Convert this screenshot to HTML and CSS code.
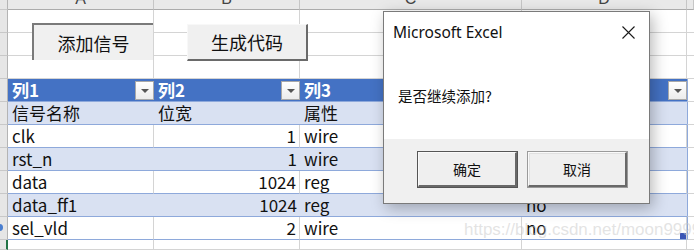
FILE: index.html
```html
<!DOCTYPE html>
<html>
<head>
    <title>信号表 - Excel</title>
    <link rel="stylesheet" href="styles.css">
</head>
<body>
    <div class="sheet">
        <div class="row colhead">
            <div class="rh"></div>
            <div class="ch"><span>A</span></div>
            <div class="ch"><span>B</span></div>
            <div class="ch"><span>C</span></div>
            <div class="ch"><span>D</span></div>
            <div class="ch edge"></div>
        </div>
        <div class="row"><div class="rh"></div><div class="c"></div><div class="c"></div><div class="c"></div><div class="c"></div><div class="c edge"></div></div>
        <div class="row"><div class="rh"></div><div class="c"></div><div class="c"></div><div class="c"></div><div class="c"></div><div class="c edge"></div></div>
        <div class="row"><div class="rh"></div><div class="c"></div><div class="c"></div><div class="c"></div><div class="c"></div><div class="c edge"></div></div>

        <div class="row thead">
            <div class="rh"></div>
            <div class="c">列1<span class="drop"></span></div>
            <div class="c">列2<span class="drop"></span></div>
            <div class="c">列3<span class="drop"></span></div>
            <div class="c"><span class="drop"></span></div>
            <div class="c edge"></div>
        </div>
        <div class="row band">
            <div class="rh"></div>
            <div class="c">信号名称</div>
            <div class="c">位宽</div>
            <div class="c">属性</div>
            <div class="c"></div>
            <div class="c edge"></div>
        </div>
        <div class="row body">
            <div class="rh"></div>
            <div class="c">clk</div>
            <div class="c num">1</div>
            <div class="c">wire</div>
            <div class="c"></div>
            <div class="c edge"></div>
        </div>
        <div class="row band">
            <div class="rh"></div>
            <div class="c">rst_n</div>
            <div class="c num">1</div>
            <div class="c">wire</div>
            <div class="c"></div>
            <div class="c edge"></div>
        </div>
        <div class="row body">
            <div class="rh"></div>
            <div class="c">data</div>
            <div class="c num">1024</div>
            <div class="c">reg</div>
            <div class="c"></div>
            <div class="c edge"></div>
        </div>
        <div class="row band">
            <div class="rh"></div>
            <div class="c">data_ff1</div>
            <div class="c num">1024</div>
            <div class="c">reg</div>
            <div class="c">no</div>
            <div class="c edge"></div>
        </div>
        <div class="row body">
            <div class="rh"><span class="dot"></span></div>
            <div class="c">sel_vld</div>
            <div class="c num">2</div>
            <div class="c">wire</div>
            <div class="c">no<span class="handle"></span></div>
            <div class="c edge"></div>
        </div>
        <div class="row tail">
            <div class="rh sel"></div><div class="c"></div><div class="c"></div><div class="c"></div><div class="c"></div><div class="c edge"></div>
        </div>
    </div>

    <!-- form buttons floating on the sheet -->
    <div class="xl-btn add">添加信号</div>
    <div class="xl-btn gen">生成代码</div>

    <div class="watermark">https://blog.csdn.net/moon9999</div>

    <div class="dialog">
        <div class="dlg-top">
            <div class="dlg-title">
                <span>Microsoft Excel</span>
                <svg class="close" width="13" height="13" viewBox="0 0 13 13">
                    <path d="M0.5 0.5 L12.5 12.5 M12.5 0.5 L0.5 12.5" stroke="#1a1a1a" stroke-width="1.1" fill="none"/>
                </svg>
            </div>
            <div class="dlg-msg">是否继续添加?</div>
        </div>
        <div class="dlg-foot">
            <div class="dlg-btn ok">确定</div>
            <div class="dlg-btn">取消</div>
        </div>
    </div>
</body>
</html>
```

FILE: styles.css
```css
body {
    margin: 0;
    width: 694px;
    height: 250px;
    overflow: hidden;
    background: #fff;
    font-family: "Noto Sans CJK SC", "DejaVu Sans", sans-serif;
    color: #111;
}

.sheet {
    display: flex;
    flex-direction: column;
}

.row {
    display: grid;
    grid-template-columns: 8px 146px 146px 222px 165px 1fr;
    height: 23px;
    font-size: 17px;
    line-height: 22px;
}

.row.tail {
    height: 10px;
}

.rh {
    background: #e6e6e6;
    border-right: 1px solid #b4b4b4;
    border-bottom: 1px solid #c8c8c8;
    position: relative;
}

.c {
    border-right: 1px solid #d4d4d4;
    border-bottom: 1px solid #d4d4d4;
    padding: 0 4px;
    white-space: nowrap;
    overflow: hidden;
    position: relative;
}

.colhead {
    height: 10px;
}

.ch {
    background: #e9e9e9;
    border-right: 1px solid #c6c6c6;
    border-bottom: 1px solid #ababab;
    display: flex;
    justify-content: center;
    align-items: flex-end;
    overflow: hidden;
    font-family: "Liberation Sans", sans-serif;
    font-size: 16px;
    color: #444;
}

.ch span {
    line-height: 1;
    margin-bottom: 2px;
}

.thead .c {
    background: #4472c4;
    color: #fff;
    font-weight: bold;
    border-right: none;
    border-bottom: 1px solid #8ea9db;
    padding-left: 4px;
}

.thead .c.edge,
.band .c.edge,
.body .c.edge {
    background: #fff;
    border-left: 1px solid #8ea9db;
    border-bottom: 1px solid #d4d4d4;
    border-right: none;
}

.band .c {
    background: #d9e1f2;
    border-right: none;
    border-bottom: 1px solid #8ea9db;
}

.body .c {
    border-bottom: 1px solid #8ea9db;
}

.num {
    text-align: right;
    padding-right: 3px;
}

.drop {
    position: absolute;
    right: 0;
    top: 2px;
    width: 19px;
    height: 19px;
    box-sizing: border-box;
    border: 1px solid #a9a9a9;
    background: linear-gradient(#ffffff, #ececec);
}

.drop::after {
    content: "";
    position: absolute;
    left: 5px;
    top: 7px;
    border-left: 4px solid transparent;
    border-right: 4px solid transparent;
    border-top: 4px solid #555;
}

.handle {
    position: absolute;
    right: 0;
    bottom: 0;
    width: 6px;
    height: 6px;
    background: #3b56b5;
}

.dot {
    position: absolute;
    left: -4px;
    top: 7px;
    width: 7px;
    height: 7px;
    border-radius: 50%;
    background: #4a7fd0;
}

.rh.sel {
    border-right: 2px solid #217346;
}

.xl-btn {
    position: absolute;
    width: 121px;
    height: 37px;
    box-sizing: border-box;
    background: #f0f0f0;
    display: flex;
    align-items: center;
    justify-content: center;
    font-size: 18px;
    color: #111;
}

.xl-btn.add {
    left: 32px;
    top: 23px;
    border-top: 2px solid #7a7a7a;
    border-left: 2px solid #7a7a7a;
}

.xl-btn.gen {
    left: 187px;
    top: 24px;
    border-top: 1px solid #f8f8f8;
    border-left: 1px solid #f8f8f8;
    border-right: 2px solid #6a6a6a;
    border-bottom: 2px solid #6a6a6a;
}

.watermark {
    position: absolute;
    left: 464px;
    top: 220px;
    font-family: "Liberation Sans", sans-serif;
    font-size: 17px;
    color: rgba(200, 200, 200, 0.5);
    white-space: nowrap;
}

.dialog {
    position: absolute;
    left: 383px;
    top: 11px;
    width: 267px;
    height: 193px;
    box-sizing: border-box;
    border: 1px solid #7a7a7a;
    background: #f0f0f0;
    box-shadow: 3px 4px 14px rgba(0, 0, 0, 0.28);
    display: flex;
    flex-direction: column;
}

.dlg-top {
    background: #fff;
    height: 127px;
}

.dlg-title {
    display: flex;
    justify-content: space-between;
    align-items: center;
    padding: 9px 14px 0 9px;
    font-family: "Noto Sans", sans-serif;
    font-size: 15.5px;
    color: #111;
}

.dlg-msg {
    padding: 42px 0 0 14px;
    font-size: 14.5px;
}

.dlg-foot {
    display: flex;
    gap: 11px;
    padding: 13px 0 0 34px;
}

.dlg-btn {
    width: 99px;
    height: 35px;
    box-sizing: border-box;
    background: #efefef;
    border-top: 1px solid #fafafa;
    border-left: 1px solid #fafafa;
    border-right: 2px solid #696969;
    border-bottom: 2px solid #696969;
    box-shadow: inset 1px 1px 0 #e0e0e0, 0 0 0 1px #9a9a9a;
    display: flex;
    align-items: center;
    justify-content: center;
    font-size: 14px;
}

.dlg-btn.ok {
    box-shadow: 0 0 0 1px #555;
}
```
